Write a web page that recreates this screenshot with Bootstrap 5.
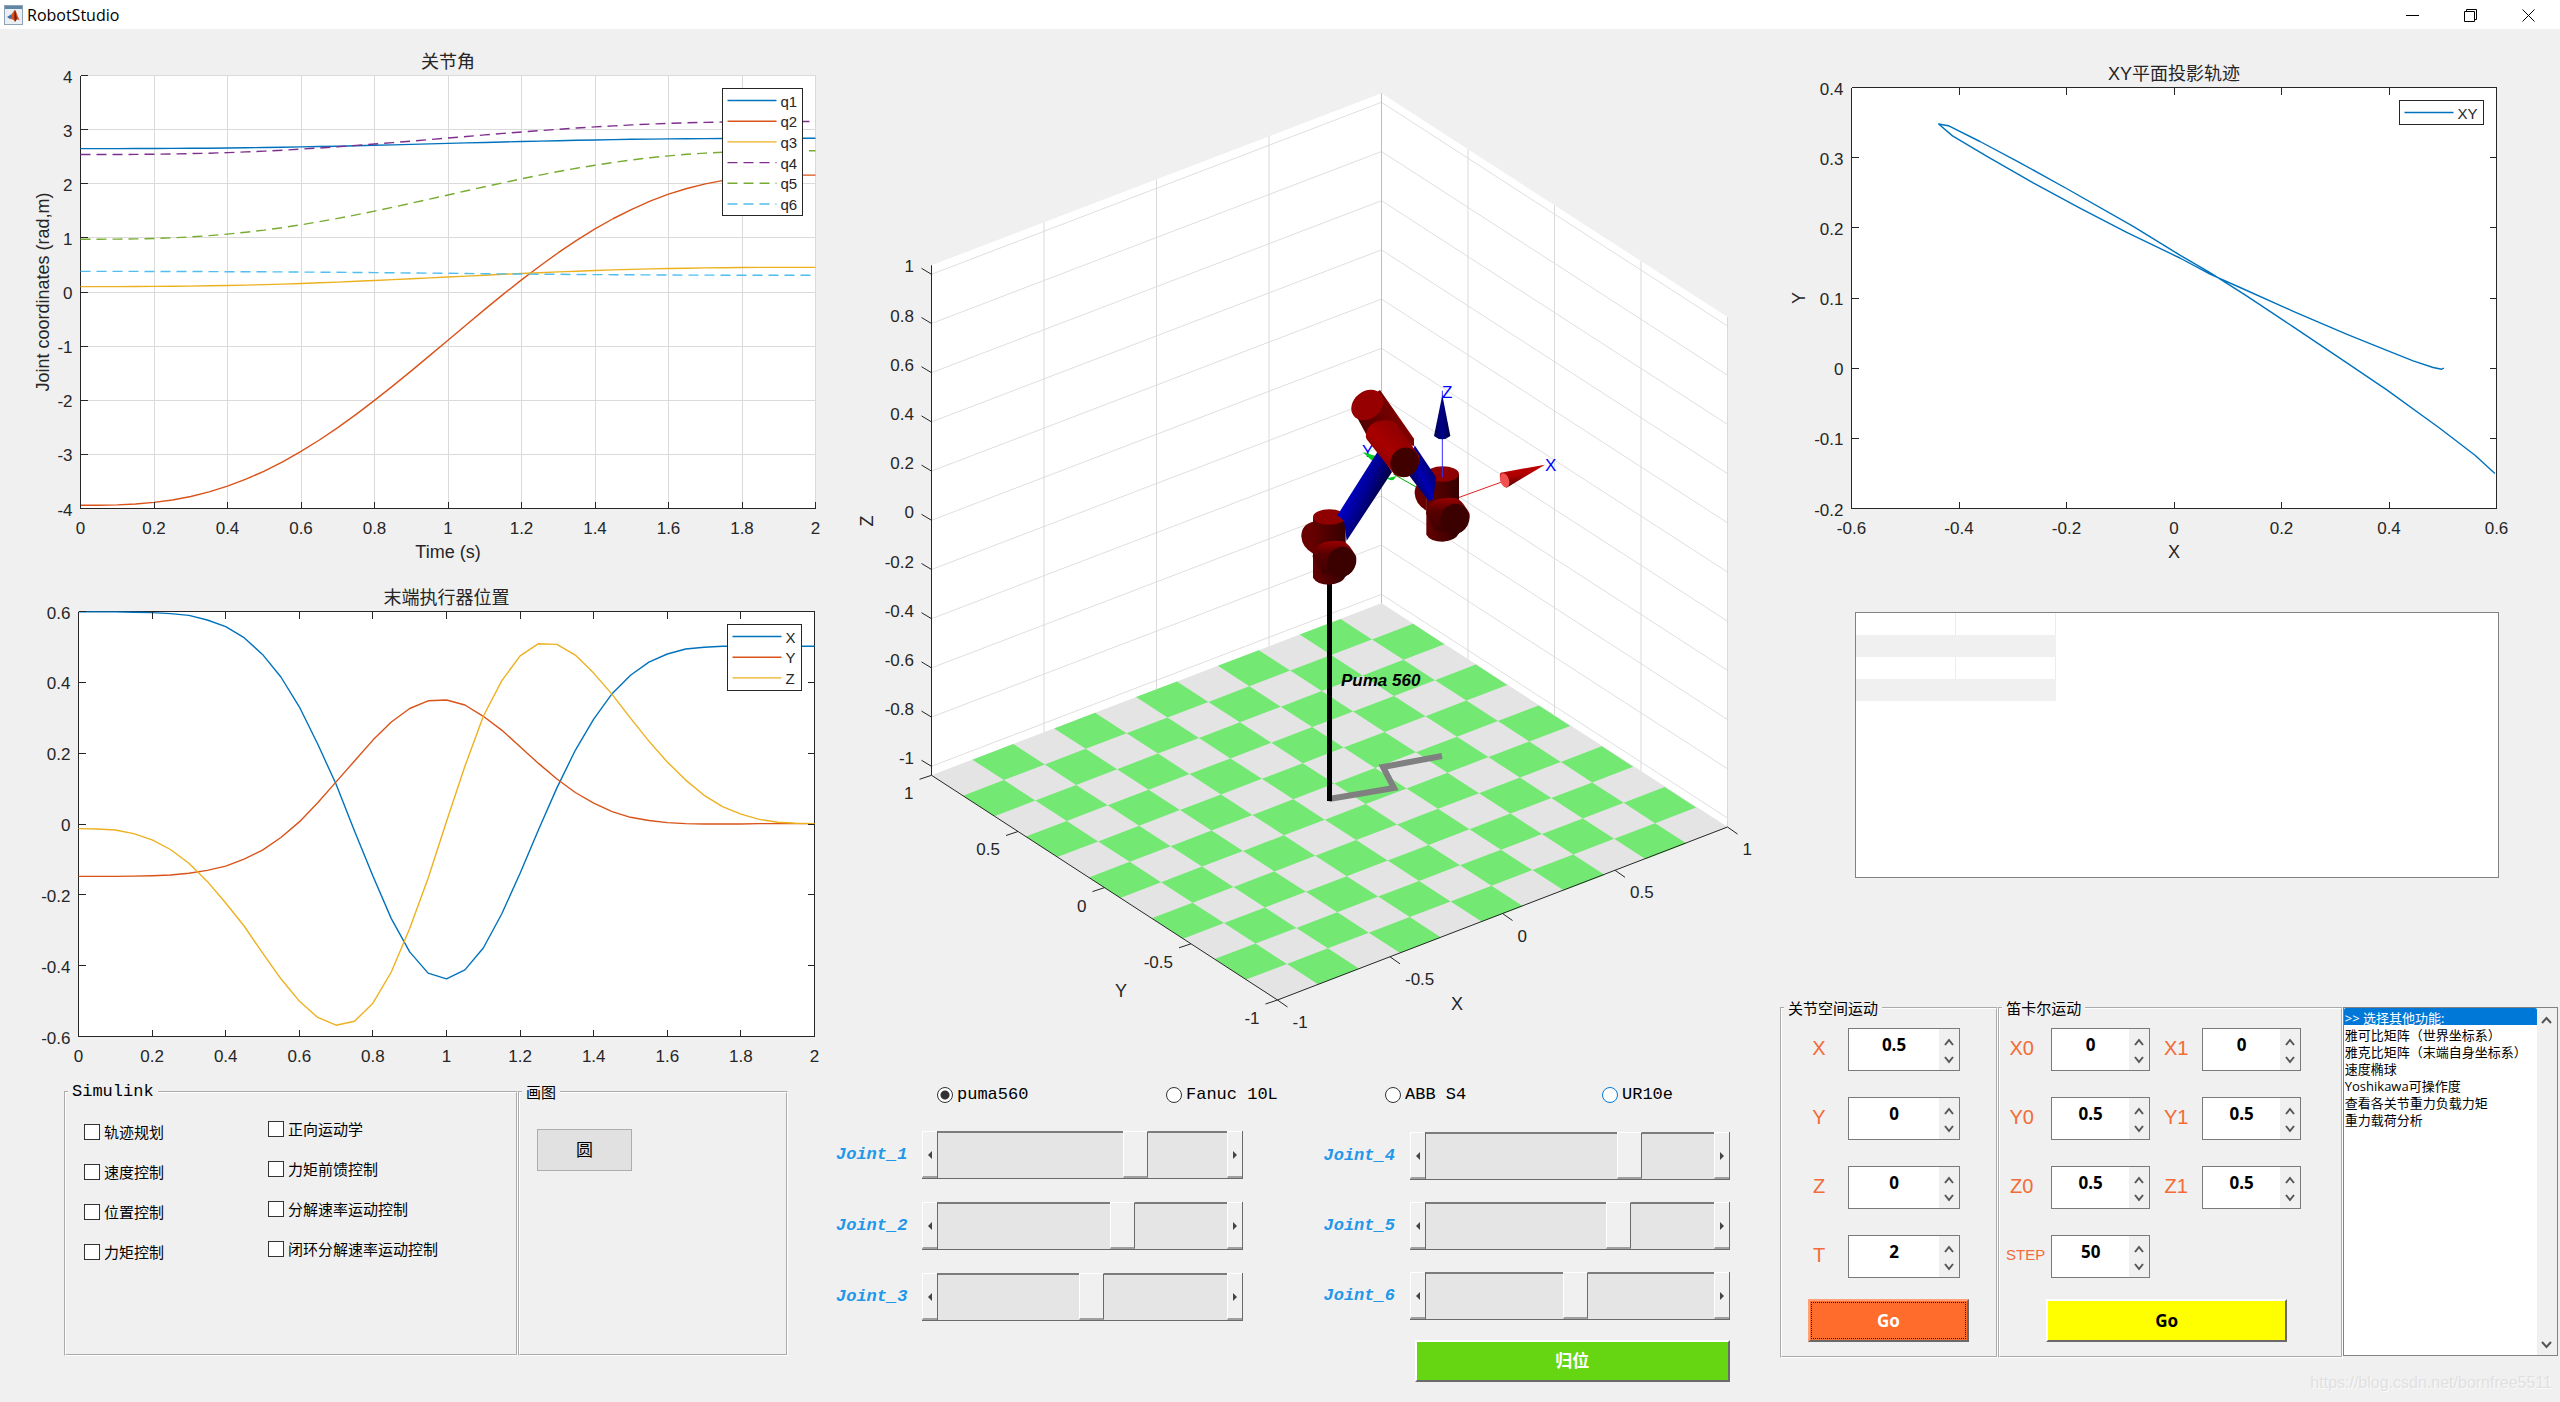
<!DOCTYPE html>
<html lang="zh-CN">
<head>
<meta charset="utf-8">
<meta name="viewport" content="width=device-width, initial-scale=1">
<title>RobotStudio</title>
<link href="https://cdn.jsdelivr.net/npm/bootstrap@5.3.0/dist/css/bootstrap.min.css" rel="stylesheet">
<style>
  :root { --face: #f0f0f0; --line: #7a7a7a; --cjk: "Open Sans", "Noto Sans CJK SC", sans-serif; }
  body { background: var(--face); color: #000; font: 15px/20px var(--cjk); }
  .title-bar { height: 29px; background: #fff; }
  .title-bar h1 { font: 16px/20px "Open Sans", sans-serif; }
  .win-btns { padding-right: 3px; }
  .win-btn { width: 58px; height: 29px; padding: 0; border: 0; background: none; line-height: 1; }
  .pane-plots { flex: 830 1 0; min-width: 0; }
  .pane-robot { flex: 930 1 0; min-width: 0; }
  .pane-tools { flex: 800 1 0; min-width: 0; }

  svg text { font-family: "Liberation Sans", "Noto Sans CJK SC", sans-serif; fill: #262626; }
  .tick-text { font-size: 17px; }
  .axis-text { font-size: 18px; }
  .key-text { font-size: 15px; }
  .triad-text { font-size: 17px; fill: #00f !important; }
  .robot-text { font: italic bold 17px "Liberation Sans", sans-serif; fill: #000 !important; }

  .group { border: 2px groove #fff; padding: 0; margin: 0; min-width: 0; }
  .group > legend { float: none; width: auto; margin: 0 0 0 2px; padding: 0 4px; font-size: 15px; line-height: 20px; }
  .mono, .group > legend.mono { font-family: "Liberation Mono", monospace; font-size: 17px; }
  .panels-left { margin: 7px 42px 0 64px; }
  .panels-left .group { height: 274px; }
  .group-simulink { flex: 455 1 0; }
  .group-draw { flex: 269 1 0; }
  .checks { row-gap: 20px; }
  .checks-a { width: 184px; padding: 20px 0 0 18px; }
  .checks-b { padding: 17px 0 0 18px; }
  .tick-box { appearance: none; width: 16px; height: 16px; margin: 0; border: 1px solid #333; background: #fff; }
  .draw-btn { width: 95px; height: 42px; margin: 27px 0 0 17px; border: 1px solid #adadad; background: #e1e1e1; font-size: 17px; padding: 0; }

  .robots { display: grid; grid-template-columns: 229fr 219fr 217fr 158fr; margin-top: 10px; padding-left: 107px; }
  .dot { appearance: none; width: 16px; height: 16px; margin: 0; border: 1px solid #333; border-radius: 50%; background: #fff; }
  .dot:checked { background: radial-gradient(circle, #333 4px, #fff 5px); }
  .dot-hot { border-color: #0078d7; }
  .joints { margin: 26px 30px 0 6px; column-gap: 81px; }
  .joint-list { row-gap: 23px; }
  .joint-list-b { row-gap: 22px; padding-top: 1px; }
  .joint-name { width: 86px; color: #1f97ea; font-weight: bold; font-style: italic; }
  .slide { height: 48px; border-bottom: 1px solid #6a6a6a; border-right: 1px solid #6a6a6a; }
  .slide button { width: 15px; padding: 0; border: 0; border-top: 1px solid #fff; border-left: 1px solid #fff; border-bottom: 2px solid #a0a0a0; background: var(--face); line-height: 1; }
  .slide input { appearance: none; height: 47px; min-width: 0; margin: 0; background: #e5e5e5; border-left: 1px solid #6a6a6a; box-shadow: inset 0 2px #7c7c7c; }
  .slide input::-webkit-slider-thumb { appearance: none; width: 25px; height: 47px; border-radius: 0; background: var(--face); border: solid; border-width: 1px 1px 2px 1px; border-color: #fff #6a6a6a #a0a0a0 #fff; }
  .raised { border: solid; border-width: 2px; border-color: #fff #6a6a6a #6a6a6a #fff; padding: 0; font: bold 17px/20px "Noto Sans", "Noto Sans CJK SC", sans-serif; }
  .home-btn { height: 42px; margin: 20px 0 0 91px; background: #66d613; color: #fff; }

  .data-box { height: 266px; margin: 42px 61px 0 95px; border: 1px solid #828282; background: #fff; }
  .data-grid { width: 200px; table-layout: fixed; border-collapse: collapse; }
  .data-grid td { width: 50%; height: 22px; padding: 0; border-right: 1px solid #ececec; }
  .data-grid tr:nth-child(even) td { background: var(--face); border-color: var(--face); }
  .panels-right { margin: 120px 2px 0 20px; }
  .panels-right .group { height: 360px; }
  .group-joint { flex: 217 1 0; }
  .group-cart { flex: 345 1 0; }
  .func-box { flex: 216 1 0; height: 349px; margin-top: 9px; border: 1px solid #828282; background: #fff; }
  .func-box select { border: 0; padding: 0; overflow: hidden; font: 13px/17px "Open Sans", "Noto Sans CJK SC", sans-serif; color: #000; outline: 0; min-width: 0; }
  .func-box option { height: 17px; min-height: 17px; padding: 0 0 0 1px; }
  .func-box option:checked { background: linear-gradient(#0078d7, #0078d7); color: #fff; }
  .func-scroll { width: 20px; background: var(--face); }
  .func-scroll button, .spin button { border: 0; padding: 0; background: none; line-height: 1; }
  .func-scroll button { height: 22px; }
  .fields { row-gap: 26px; padding-top: 10px; }
  .field-name { color: #f26b38; font: 20px/24px "Liberation Sans", sans-serif; text-align: center; padding-bottom: 4px; }
  .name-j { width: 58px; margin-left: 8px; }
  .name-0 { width: 51px; padding-right: 8px; }
  .name-1 { width: 52px; }
  .name-step { font-size: 15px; padding-right: 0; }
  .spin { height: 43px; border: 1px solid var(--line); background: #fff; }
  .spin-j { width: 112px; }
  .spin-c { width: 99px; }
  .spin input { height: 31px; min-width: 0; border: 0; padding: 0; background: none; text-align: center; font: bold 17px/30px "Noto Sans", sans-serif; color: #000; appearance: textfield; outline: 0; }
  .spin input::-webkit-inner-spin-button { appearance: none; display: none; }
  .spin-arrows { width: 20px; background: var(--face); padding: 2px 0; }
  .go-btn { height: 43px; margin-top: 21px; }
  .go-joint { width: 161px; margin-left: 26px; background: #ff6c2c; color: #fff; outline: 1px dotted #000; outline-offset: -4px; border-color: #ffa27c #6a6a6a #6a6a6a #ffa27c; }
  .go-cart { width: 241px; margin-left: 46px; background: #ff0; color: #000; }
  .credit { margin: 15px 8px 0 0; font: 16px/20px "Liberation Sans", sans-serif; color: #e0e0e0; text-shadow: 1px 1px #fafafa; }
</style>
</head>
<body>

<header class="title-bar d-flex align-items-center">
  <svg class="ms-1 me-1" width="19" height="20" viewBox="0 0 19 20" aria-hidden="true">
    <rect x=".5" y=".5" width="18" height="19" fill="#e9eff5" stroke="#8fa3b5"/>
    <rect x="1" y="1" width="17" height="3" fill="#5f87a5"/>
    <path d="M3 12 7 9.500 9 12 6 14z" fill="#3a6ea8"/>
    <path d="M7 9.500C9 8 10 5 11 5s2 5 5 11c-2-2-3-2-5 1-1-2-2-3-5-3 2-1 2-3 1-4.500z" fill="#d9521c"/>
    <path d="M11 5c-1 3-1 8 0 12 1-2 1-3 2-3C12 11 12 7 11 5z" fill="#7a1c10"/>
  </svg>
  <h1 class="m-0 flex-grow-1">RobotStudio</h1>
  <div class="win-btns d-flex">
    <button class="win-btn" aria-label="最小化"><svg width="13" height="13" viewBox="0 0 13 13"><path d="M0 6.500h13" stroke="#000"/></svg></button>
    <button class="win-btn" aria-label="还原"><svg width="13" height="13" viewBox="0 0 13 13" fill="none" stroke="#000"><path d="M.5 2.500h10v10H.5zM2.500 2.500v-2h10v10h-2"/></svg></button>
    <button class="win-btn" aria-label="关闭"><svg width="13" height="13" viewBox="0 0 13 13"><path d="M.5.5l12 12M12.500.5l-12 12" stroke="#000"/></svg></button>
  </div>
</header>

<main class="d-flex">
  <section class="pane-plots">
    <svg id="plotJoints" class="d-block w-100" viewBox="0 29 830 541"></svg>
    <svg id="plotPose" class="d-block w-100" viewBox="0 570 830 505"></svg>
    <div class="panels-left d-flex">
      <fieldset class="group group-simulink">
        <legend class="mono">Simulink</legend>
        <div class="d-flex">
          <div class="checks checks-a d-flex flex-column">
            <label class="d-flex align-items-center gap-1"><input class="tick-box" type="checkbox">轨迹规划</label>
            <label class="d-flex align-items-center gap-1"><input class="tick-box" type="checkbox">速度控制</label>
            <label class="d-flex align-items-center gap-1"><input class="tick-box" type="checkbox">位置控制</label>
            <label class="d-flex align-items-center gap-1"><input class="tick-box" type="checkbox">力矩控制</label>
          </div>
          <div class="checks checks-b d-flex flex-column">
            <label class="d-flex align-items-center gap-1"><input class="tick-box" type="checkbox">正向运动学</label>
            <label class="d-flex align-items-center gap-1"><input class="tick-box" type="checkbox">力矩前馈控制</label>
            <label class="d-flex align-items-center gap-1"><input class="tick-box" type="checkbox">分解速率运动控制</label>
            <label class="d-flex align-items-center gap-1"><input class="tick-box" type="checkbox">闭环分解速率运动控制</label>
          </div>
        </div>
      </fieldset>
      <fieldset class="group group-draw">
        <legend>画图</legend>
        <button class="draw-btn">圆</button>
      </fieldset>
    </div>
  </section>

  <section class="pane-robot">
    <svg class="d-block w-100" viewBox="830 29 930 1046">
      <defs>
        <linearGradient id="redTube" x1="0" x2="1"><stop offset="0" stop-color="#640000"/><stop offset=".5" stop-color="#4c0000"/><stop offset="1" stop-color="#350000"/></linearGradient>
        <linearGradient id="redUpper" x1="0" y1="1" x2="1" y2="0"><stop offset="0" stop-color="#6a0000"/><stop offset=".45" stop-color="#a80000"/><stop offset="1" stop-color="#7a0000"/></linearGradient>
        <linearGradient id="redFront" x1="0" y1="0" x2="0" y2="1"><stop offset="0" stop-color="#9a0000"/><stop offset=".35" stop-color="#5a0000"/><stop offset="1" stop-color="#3a0000"/></linearGradient>
        <linearGradient id="redSide" x1="0" y1=".6" x2="1" y2=".3"><stop offset="0" stop-color="#4a0000"/><stop offset=".5" stop-color="#6c0000"/><stop offset="1" stop-color="#8e0000"/></linearGradient>
        <linearGradient id="blueLink" x1=".3" y1=".35" x2=".7" y2=".65"><stop offset="0" stop-color="#0000c4"/><stop offset=".5" stop-color="#000090"/><stop offset="1" stop-color="#00003c"/></linearGradient>
        <linearGradient id="blueLink2" x1=".7" y1=".3" x2=".3" y2=".7"><stop offset="0" stop-color="#00007a"/><stop offset=".6" stop-color="#0000b4"/><stop offset="1" stop-color="#000070"/></linearGradient>
        <linearGradient id="cone" x1="0" x2="1"><stop offset="0" stop-color="#000050"/><stop offset=".5" stop-color="#00008a"/><stop offset="1" stop-color="#000040"/></linearGradient>
        <linearGradient id="coneRed" x1="0" y1="0" x2=".2" y2="1"><stop offset="0" stop-color="#c40000"/><stop offset=".5" stop-color="#b00000"/><stop offset="1" stop-color="#500000"/></linearGradient>
      </defs>
      <g id="scene"></g>
      <path d="M1329 799 1394 788 1383 767 1442 756" fill="none" stroke="#808080" stroke-width="6"/>
      <path d="M1329.500 580V801" stroke="#000" stroke-width="5"/>
      <text class="triad-text" x="1362" y="457">Y</text>
      <g transform="translate(1280 370) scale(.33333)">
        <path d="M410 352 340 312" stroke="#0a0" stroke-width="3"/>
        <path d="M248 246 300 262 276 272zM300 330 350 318 340 330q-14 2-20-6z" fill="#0c2"/>
        <path d="M535 383 668 335" stroke="#e02020" stroke-width="3"/>
        <path d="M795 284 662 308q-10 24 18 45z" fill="url(#coneRed)"/>
        <ellipse cx="674" cy="331" rx="13" ry="22" transform="rotate(-18 674 331)" fill="#f05050"/>
        <g id="jointBlock">
          <path d="M440 326q-36 8-36 44 2 34 36 52z" fill="#680000"/>
          <path d="M439 312V494q12 21 49 21 38-2 49-25V312z" fill="url(#redTube)"/>
          <ellipse cx="488" cy="312" rx="49" ry="23" fill="#8f0000"/>
          <path d="M438 430q4-30 34-42 30-8 58-3 14 4 38 44 4 20-6 38-12 20-36 25l-60-10z" fill="url(#redFront)"/>
          <ellipse cx="524" cy="447" rx="42" ry="46" transform="rotate(25 524 447)" fill="#3b0000"/>
        </g>
        <path d="M487 322V62" stroke="#3030ff" stroke-width="3"/>
        <path d="M487 75 462 198q24 20 49 0z" fill="url(#cone)"/>
        <path d="M404 226 468 322 460 388 446 393 384 312z" fill="url(#blueLink2)"/>
        <use href="#jointBlock" x="-340" y="129"/>
        <path d="M296 240 336 306 200 512 192 452 172 436z" fill="url(#blueLink)"/>
        <path d="M218 118 300 60 402 206 402 228 258 192z" fill="url(#redSide)"/>
        <ellipse cx="262" cy="105" rx="52" ry="41" transform="rotate(-38 262 105)" fill="#960000"/>
        <path d="M258 192q6-34 44-40 36-6 50 14l66 92q6 30-30 60-26 8-44-4l-84-106q-4-8-2-16z" fill="url(#redUpper)"/>
        <ellipse cx="374" cy="277" rx="42" ry="45" transform="rotate(30 374 277)" fill="#400000"/>
      </g>
      <text class="triad-text" x="1442" y="398">Z</text>
      <text class="triad-text" x="1545" y="471">X</text>
      <text class="robot-text" x="1341" y="686">Puma 560</text>
    </svg>

    <div class="robots mono">
      <label class="d-flex align-items-center gap-1"><input class="dot" type="radio" name="robot" checked>puma560</label>
      <label class="d-flex align-items-center gap-1"><input class="dot" type="radio" name="robot">Fanuc 10L</label>
      <label class="d-flex align-items-center gap-1"><input class="dot" type="radio" name="robot">ABB S4</label>
      <label class="d-flex align-items-center gap-1"><input class="dot dot-hot" type="radio" name="robot">UR10e</label>
    </div>

    <div class="joints d-flex align-items-start">
      <div class="joint-list d-flex flex-column flex-fill" data-joints="1:703 2:653 3:534"></div>
      <div class="flex-fill">
        <div class="joint-list joint-list-b d-flex flex-column" data-joints="4:726 5:685 6:521"></div>
        <div class="d-flex"><button class="raised home-btn flex-grow-1">归位</button></div>
      </div>
    </div>
  </section>

  <section class="pane-tools">
    <svg id="plotXY" class="d-block w-100" viewBox="1760 29 800 541"></svg>
    <div class="data-box">
      <table class="data-grid" aria-label="数据">
        <tbody><tr><td></td><td></td></tr><tr><td></td><td></td></tr><tr><td></td><td></td></tr><tr><td></td><td></td></tr></tbody>
      </table>
    </div>
    <div class="panels-right d-flex">
      <fieldset class="group group-joint">
        <legend>关节空间运动</legend>
        <div class="fields d-flex flex-column">
          <div class="d-flex align-items-center" data-fields="X:j:0.5"></div>
          <div class="d-flex align-items-center" data-fields="Y:j:0"></div>
          <div class="d-flex align-items-center" data-fields="Z:j:0"></div>
          <div class="d-flex align-items-center" data-fields="T:j:2"></div>
        </div>
        <button class="raised go-btn go-joint">Go</button>
      </fieldset>
      <fieldset class="group group-cart">
        <legend>笛卡尔运动</legend>
        <div class="fields d-flex flex-column">
          <div class="d-flex align-items-center" data-fields="X0:0:0 X1:1:0"></div>
          <div class="d-flex align-items-center" data-fields="Y0:0:0.5 Y1:1:0.5"></div>
          <div class="d-flex align-items-center" data-fields="Z0:0:0.5 Z1:1:0.5"></div>
          <div class="d-flex align-items-center" data-fields="STEP:0:50"></div>
        </div>
        <button class="raised go-btn go-cart">Go</button>
      </fieldset>
      <div class="func-box d-flex">
        <select class="flex-grow-1" size="20" aria-label="选择其他功能">
          <option selected>&gt;&gt; 选择其他功能:</option>
          <option>雅可比矩阵（世界坐标系）</option>
          <option>雅克比矩阵（末端自身坐标系）</option>
          <option>速度椭球</option>
          <option>Yoshikawa可操作度</option>
          <option>查看各关节重力负载力矩</option>
          <option>重力载荷分析</option>
        </select>
        <div class="func-scroll d-flex flex-column justify-content-between">
          <button aria-label="向上"><svg width="11" height="8" viewBox="0 0 11 8"><path d="M1 7 5.500 2 10 7" fill="none" stroke="#555" stroke-width="2"/></svg></button>
          <button aria-label="向下"><svg width="11" height="8" viewBox="0 0 11 8"><path d="M1 1 5.500 6 10 1" fill="none" stroke="#555" stroke-width="2"/></svg></button>
        </div>
      </div>
    </div>
    <div class="credit text-end">https://blog.csdn.net/bornfree5511</div>
  </section>
</main>

<script src="https://cdn.jsdelivr.net/npm/bootstrap@5.3.0/dist/js/bootstrap.bundle.min.js"></script>
<script>
const BLUE = '#0072bd', RED = '#d95319', GOLD = '#edb120', PURPLE = '#7e2f8e', GREEN = '#77ac30', CYAN = '#4dbeee';
const range = (a, b, step) => Array.from({ length: Math.round((b - a) / step) + 1 }, (_, i) => +(a + i * step).toFixed(2));
const line = (x1, y1, x2, y2, c = '#262626', extra = '') => `<path d="M${x1} ${y1}L${x2} ${y2}" stroke="${c}" fill="none" ${extra}/>`;
const label = (x, y, s, cls = 'tick-text', anchor = 'middle', extra = '') =>
  `<text class="${cls}" x="${x}" y="${y}" text-anchor="${anchor}" ${extra}>${s}</text>`;

// 2-D axes: limits, ticks, optional grid or box, curves and a legend
function plot(id, o) {
  const { l, r, t, b } = o.frame, crisp = 'shape-rendering="crispEdges"';
  const X = v => l + (v - o.x[0]) / (o.x[1] - o.x[0]) * (r - l);
  const Y = v => b - (v - o.y[0]) / (o.y[1] - o.y[0]) * (b - t);
  let s = `<rect x="${l}" y="${t}" width="${r - l}" height="${b - t}" fill="#fff"/>`;
  const xs = range(...o.x), ys = range(...o.y);
  if (o.grid) {
    xs.forEach(v => s += line(X(v), t, X(v), b, '#dadada', crisp));
    ys.forEach(v => s += line(l, Y(v), r, Y(v), '#dadada', crisp));
  }
  s += line(l, t, l, b, undefined, crisp) + line(l, b, r, b, undefined, crisp);
  if (!o.grid) s += line(l, t, r, t, undefined, crisp) + line(r, t, r, b, undefined, crisp);
  o.curves.forEach(c => s += `<polyline fill="none" stroke="${c.color}" stroke-width="1.4" stroke-linejoin="round" ${c.dash ? 'stroke-dasharray="10 6"' : ''} points="${c.pts.map(p => X(p[0]).toFixed(1) + ',' + Y(p[1]).toFixed(1)).join(' ')}"/>`);
  xs.forEach(v => {
    s += line(X(v), b, X(v), b - 7, undefined, crisp) + label(X(v), b + 25, v);
    if (!o.grid) s += line(X(v), t, X(v), t + 7, undefined, crisp);
  });
  ys.forEach(v => {
    s += line(l, Y(v), l + 7, Y(v), undefined, crisp) + label(l - 8, Y(v) + 7, v, 'tick-text', 'end');
    if (!o.grid) s += line(r, Y(v), r - 7, Y(v), undefined, crisp);
  });
  s += label((l + r) / 2, t - 8, o.title, 'axis-text');
  if (o.xlabel) s += label((l + r) / 2, b + 49, o.xlabel, 'axis-text');
  if (o.ylabel) s += label(0, 0, o.ylabel, 'axis-text', 'middle', `transform="translate(${o.ylabelX} ${(t + b) / 2}) rotate(-90)"`);
  const k = o.key;
  s += `<rect x="${k.x}" y="${k.y}" width="${k.w}" height="${k.h}" fill="#fff" stroke="#262626" ${crisp}/>`;
  o.curves.forEach((c, i) => {
    const cy = k.y + 12 + i * 20.7;
    s += line(k.x + 5, cy, k.x + 54, cy, c.color, c.dash ? 'stroke-dasharray="10 6" stroke-width="1.4"' : 'stroke-width="1.4"');
    s += label(k.x + 58, cy + 6, c.name, 'key-text', 'start');
  });
  document.getElementById(id).innerHTML = s;
}

// quintic joint trajectory between two values over two seconds
const quintic = (a, b) => range(0, 2, .05).map(t => { const u = t / 2; return [t, a + (b - a) * (10 * u ** 3 - 15 * u ** 4 + 6 * u ** 5)]; });
plot('plotJoints', {
  frame: { l: 80.5, r: 815.5, t: 75.5, b: 508.5 }, x: [0, 2, .2], y: [-4, 4, 1], grid: true,
  title: '关节角', xlabel: 'Time (s)', ylabel: 'Joint coordinates (rad,m)', ylabelX: 49,
  key: { x: 722.5, y: 88.5, w: 80, h: 127 },
  curves: [
    { name: 'q1', color: BLUE, pts: quintic(2.65, 2.84) }, { name: 'q2', color: RED, pts: quintic(-3.94, 2.16) },
    { name: 'q3', color: GOLD, pts: quintic(.1, .455) }, { name: 'q4', color: PURPLE, dash: 1, pts: quintic(2.54, 3.15) },
    { name: 'q5', color: GREEN, dash: 1, pts: quintic(.975, 2.61) }, { name: 'q6', color: CYAN, dash: 1, pts: quintic(.38, .31) }]
});

const px = [.599,.599,.599,.598,.597,.594,.589,.576,.557,.526,.479,.415,.331,.226,.112,-.02,-.147,-.267,-.361,-.421,-.437,-.412,-.35,-.254,-.139,-.016,.102,.208,.296,.368,.42,.457,.48,.494,.499,.502,.502,.502,.502,.502,.502];
const py = [-.148,-.148,-.148,-.147,-.146,-.144,-.139,-.131,-.119,-.099,-.074,-.038,.006,.06,.119,.178,.237,.288,.326,.348,.35,.336,.304,.265,.218,.171,.127,.089,.059,.035,.019,.01,.004,.001,0,0,0,.001,.001,.001,.001];
const pz = [-.013,-.014,-.017,-.027,-.045,-.072,-.111,-.162,-.223,-.288,-.364,-.437,-.5,-.546,-.568,-.557,-.506,-.418,-.295,-.153,.007,.163,.304,.404,.475,.509,.507,.477,.426,.366,.299,.234,.175,.124,.081,.049,.028,.013,.005,.002,.001];
const overTime = a => a.map((v, i) => [i * .05, v]);
plot('plotPose', {
  frame: { l: 78.5, r: 814.5, t: 611.5, b: 1036.5 }, x: [0, 2, .2], y: [-.6, .6, .2], title: '末端执行器位置',
  key: { x: 727.5, y: 624.5, w: 74, h: 66 },
  curves: [{ name: 'X', color: BLUE, pts: overTime(px) }, { name: 'Y', color: RED, pts: overTime(py) }, { name: 'Z', color: GOLD, pts: overTime(pz) }]
});
const track = [[.597,-.15],[.56,-.124],[.495,-.086],[.396,-.031],[.321,.008],[.222,.059],[.135,.103],[.067,.136],[.011,.161],[-.076,.202],[-.2,.256],[-.287,.293],[-.361,.323],[-.42,.3455],[-.438,.348],
  [-.412,.331],[-.348,.302],[-.262,.264],[-.175,.228],[-.088,.1935],[.011,.157],[.067,.134],[.123,.115],[.222,.081],[.321,.0485],[.396,.0255],[.445,.0105],[.482,.001],[.498,-.0015],[.502,0]];
plot('plotXY', {
  frame: { l: 1851.5, r: 2496.5, t: 87.5, b: 508.5 }, x: [-.6, .6, .2], y: [-.2, .4, .1], title: 'XY平面投影轨迹',
  xlabel: 'X', ylabel: 'Y', ylabelX: 1805, key: { x: 2399.5, y: 100.5, w: 84, h: 24 },
  curves: [{ name: 'XY', color: BLUE, pts: track }]
});

// 3-D axes: walls, grid, tiled floor and tick labels
(function () {
  const L = [931.5, 775.3], B = [1381.5, 603.3], R = [1727.5, 827], F = [1277.5, 1000];
  const H = 510, mix = (p, q, f) => [p[0] + (q[0] - p[0]) * f, p[1] + (q[1] - p[1]) * f];
  const seg = (p, q, c, e) => line(...p.map(v => v.toFixed(1)), ...q.map(v => v.toFixed(1)), c, e);
  const up = (p, h) => [p[0], p[1] - h];
  let s = `<path fill="#fff" d="M${L}L${up(L, H)}L${up(B, H)}L${up(R, H)}L${R}L${B}Z"/>`;
  for (let i = 0; i <= 10; i++) {
    const h = 9 + i * 49.2;
    s += seg(up(L, h), up(B, h), '#dfdfdf') + seg(up(B, h), up(R, h), '#dfdfdf');
  }
  for (let i = 1; i <= 4; i++) {
    const a = mix(L, B, i / 4), b = mix(B, R, i / 4);
    s += seg(a, up(a, H), i == 4 ? '#bdbdbd' : '#d9d9d9') + seg(b, up(b, H), '#d9d9d9');
  }
  s += `<path fill="#e4e4e4" d="M${L}L${B}L${R}L${F}Z"/>`;
  let tiles = '';
  for (let i = 0; i < 11; i++) for (let j = 0; j < 11; j++) if ((i + j) % 2) {
    const at = (u, v) => { const a = mix(L, B, u / 11), b = mix(L, F, v / 11); return [(a[0] + b[0] - L[0]).toFixed(1), (a[1] + b[1] - L[1]).toFixed(1)]; };
    tiles += `M${at(i, j)}L${at(i + 1, j)}L${at(i + 1, j + 1)}L${at(i, j + 1)}Z`;
  }
  s += `<path fill="#73e873" d="${tiles}"/>` + seg(L, up(L, H)) + seg(L, F) + seg(F, R);
  for (let i = 0; i <= 10; i++) {
    const p = up(L, 9 + i * 49.2);
    s += seg(p, [p[0] - 10, p[1] - 6]) + label(914, p[1] - 2, +(-1 + i * .2).toFixed(1), 'tick-text', 'end');
  }
  ['1', '0.5', '0', '-0.5', '-1'].forEach((v, i) => {
    const p = mix(L, F, i / 4), q = mix(R, F, i / 4);
    s += seg(p, [p[0] - 12, p[1] + 4]) + label(p[0] - 18, p[1] + 24, v, 'tick-text', 'end');
    s += seg(q, [q[0] + 10, q[1] + 7]) + label(q[0] + 15, q[1] + 28, v, 'tick-text', 'start');
  });
  s += label(1121, 997, 'Y', 'axis-text') + label(1457, 1010, 'X', 'axis-text');
  s += label(0, 0, 'Z', 'axis-text', 'middle', 'transform="translate(873 521) rotate(-90)"');
  document.getElementById('scene').innerHTML = s;
})();

// joint sliders
document.querySelectorAll('[data-joints]').forEach(box => {
  box.innerHTML = box.dataset.joints.split(' ').map(j => {
    const [n, v] = j.split(':');
    return `<div class="d-flex align-items-center"><label class="joint-name mono" for="joint${n}">Joint_${n}</label>
      <div class="slide d-flex flex-grow-1"><button aria-label="减小"><svg width="4" height="8"><path d="M4 0v8L0 4z" fill="#444"/></svg></button>
      <input class="flex-grow-1" type="range" id="joint${n}" min="0" max="1000" value="${v}">
      <button aria-label="增大"><svg width="4" height="8"><path d="M0 0v8l4-4z" fill="#444"/></svg></button></div></div>`;
  }).join('');
});

// numeric fields with spin arrows
const chevron = d => `<svg width="10" height="8" viewBox="0 0 10 8"><path d="${d}" fill="none" stroke="#555" stroke-width="2"/></svg>`;
document.querySelectorAll('[data-fields]').forEach(row => {
  row.innerHTML = row.dataset.fields.split(' ').map(f => {
    const [n, kind, v] = f.split(':');
    return `<label class="field-name name-${kind} ${n == 'STEP' ? 'name-step' : ''}" for="in${n}">${n}</label>
      <div class="spin spin-${kind == 'j' ? 'j' : 'c'} d-flex align-items-start"><input class="flex-grow-1 w-100" type="number" step="any" id="in${n}" value="${v}">
      <div class="spin-arrows h-100 d-flex flex-column flex-shrink-0"><button class="flex-fill" aria-label="增加">${chevron('M1 7 5 2 9 7')}</button><button class="flex-fill" aria-label="减少">${chevron('M1 1 5 6 9 1')}</button></div></div>`;
  }).join('');
});
</script>
</body>
</html>
